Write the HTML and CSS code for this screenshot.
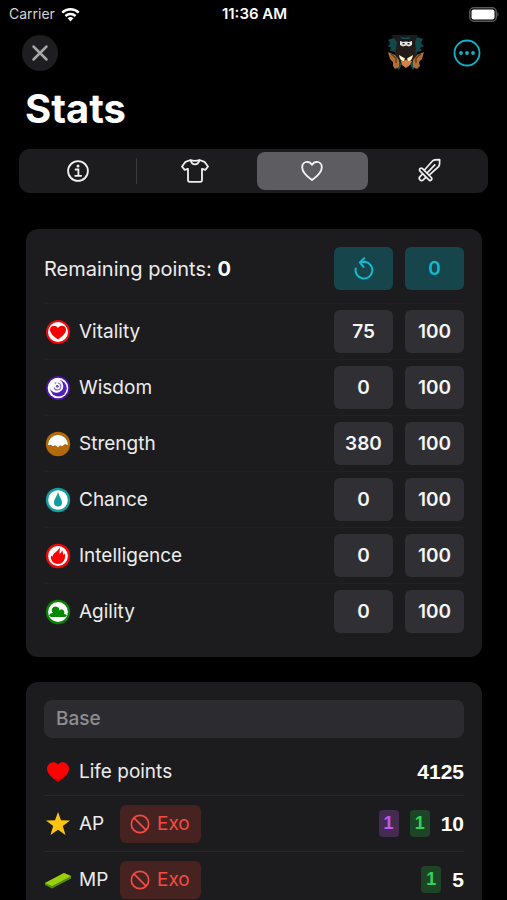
FILE: index.html
```html
<!DOCTYPE html>
<html lang="en">
<head>
<meta charset="utf-8">
<meta name="viewport" content="width=device-width, initial-scale=1">
<title>Stats</title>
<link rel="stylesheet" href="styles.css">
</head>
<body>
<div class="app">
  <div class="status">
    <div class="status-left"><span>Carrier</span>
      <svg class="wifi" viewBox="0 0 20 16" width="19" height="15" fill="none" stroke="#fff" stroke-width="2.6"><path d="M1.2 6A12.6 12.6 0 0 1 18.8 6"/><path d="M4.6 9.6A7.8 7.8 0 0 1 15.4 9.6"/><path d="M10 15.4L6.9 12.1a4.4 4.4 0 0 1 6.2 0z" fill="#fff" stroke="none"/></svg>
    </div>
    <div class="status-time">11:36 AM</div>
    <div class="status-right">
      <svg viewBox="0 0 31 15" width="31" height="15"><rect x=".75" y=".75" width="26.5" height="13.5" rx="4" fill="none" stroke="#58585a" stroke-width="1.5"/><rect x="2.5" y="2.5" width="23" height="10" rx="2" fill="#fff"/><path d="M28.5 5q2 2.500 0 5z" fill="#69696b"/></svg>
    </div>
  </div>

  <header class="nav">
    <button class="close" aria-label="Close"><svg viewBox="0 0 36 36" width="36" height="36" stroke="#a5a5aa" stroke-width="2.500" stroke-linecap="round"><path d="M11.500 11.500l13 13M24.500 11.500l-13 13"/></svg></button>
    <div class="nav-actions">
      <button class="plain" aria-label="Character">
        <svg viewBox="0 0 38 38" width="38" height="38">
          <path d="M6 4L1 6l2 3-2 4 3 0-1 4 5 1 2 8h18l2-8 5-1-2-3 4-2-3-3 2-4-6-2z" fill="#12474c"/>
          <path d="M4 1h27l-3 7 1 8H9l1-8z" fill="#1d1c1c"/>
          <path d="M14 3l4 1 5-1-1 2h-7z" fill="#14545a"/>
          <path d="M9 13q10-5 19 0l1 10-3 6H12l-4-6z" fill="#241c18"/>
          <path d="M10 26l-1 7 3 3 3-6zM28 26l1 6-3 4-3-6z" fill="#125257"/>
          <path d="M1 18l7 3 4 5 0 7-4 2-2-3 0-4-3-3zM37 18l-7 3-4 5 0 7 4 2 3-3-1-4 3-3z" fill="#b07034"/>
          <path d="M4 20l5 4 0 5M34 20l-5 4 0 5" stroke="#5c381c" fill="none" stroke-width="1.300"/>
          <path d="M14 27l5-1 6 1-2 4-4 3-4-3z" fill="#d98243"/>
          <path d="M12 21l6 3.500-1 2.500q-4 .5-5-6zM26 21l-6 3.500 1 2.500q4 .5 5-6z" fill="#fff7cf"/>
          <path d="M13 7l3 1 3-.5 3 .5 3-1 0 4-3 1.500-3-1-3 1-3-1.500z" fill="#e8e6e0"/>
          <path d="M15.500 9.700h2M20.500 9.700h2" stroke="#222" stroke-width="1.500"/>
        </svg>
      </button>
      <button class="plain" aria-label="More"><svg viewBox="0 0 28 28" width="28" height="28"><circle cx="14" cy="14" r="12.500" fill="none" stroke="#13b2c6" stroke-width="1.800"/><g fill="#13b2c6"><circle cx="8" cy="14" r="1.900"/><circle cx="14" cy="14" r="1.900"/><circle cx="20" cy="14" r="1.900"/></g></svg></button>
    </div>
  </header>

  <h1>Stats</h1>

  <nav class="tabs" aria-label="Sections">
    <button class="tab" aria-label="Info"><svg viewBox="0 0 28 28" width="28" height="28" fill="none" stroke="#f0f0f0" stroke-width="1.800"><circle cx="14" cy="14" r="9.900"/><path d="M11.600 12.500h2.800v6M11.200 18.800h6" stroke-linecap="round"/><circle cx="14" cy="9" r="1.500" fill="#f0f0f0" stroke="none"/></svg></button>
    <button class="tab divided" aria-label="Equipment"><svg viewBox="0 0 28 28" width="28" height="28" fill="none" stroke="#f0f0f0" stroke-width="1.800" stroke-linejoin="round"><path d="M9.500 3L4.500 4.800 1 9.500l2.500 3.300 3.500-1V23q0 1.800 1.800 1.800h10.400q1.800 0 1.800-1.800V11.800l3.500 1L27 9.500l-3.500-4.700L18.500 3M9.500 3q1 4.300 4.500 4.300T18.500 3q-4.500 1.700-9 0z"/></svg></button>
    <button class="tab selected" aria-label="Stats"><svg viewBox="0 0 28 28" width="28" height="28" fill="none" stroke="#f5f5f5" stroke-width="1.800" stroke-linejoin="round"><path d="M14 23C8.500 19 4.200 15 4.200 10.400c0-3.200 2.100-5.500 4.900-5.500 2.200 0 3.900 1.100 4.900 3 1-1.900 2.700-3 4.900-3 2.800 0 4.900 2.300 4.900 5.500C23.800 15 19.500 19 14 23z"/></svg></button>
    <button class="tab" aria-label="Weapons"><svg viewBox="1 0 28 28" width="28" height="28" fill="none" stroke="#f0f0f0" stroke-width="1.700" stroke-linejoin="round"><path d="M10 13.500l8.700-9.700 2-.9 5-.2-.2 5-.9 2-9.700 8.700M12.700 16.300l8.600-8.900"/><path d="M6.100 11.700q1.200-1.200 2.400 0l8.800 8.800q1.200 1.200 0 2.400t-2.400 0L6.100 14.100q-1.200-1.200 0-2.400z"/><path d="M8.600 17l-2.600 2.600a2.100 2.100 0 1 0 3.200 3.200l2.800-2.600"/></svg></button>
  </nav>

  <main class="cards">
    <section class="card">
      <div class="summary">
        <p>Remaining points: <strong>0</strong></p>
        <button class="box teal" aria-label="Reset"><svg viewBox="0 0 24 24" width="24" height="24" fill="none" stroke="#13bace" stroke-width="2" stroke-linecap="round" stroke-linejoin="round"><path d="M3.700 11.500a8.400 8.400 0 1 0 9.300-6.700L8.500 5.300M12.200 1.200L7.800 5.400l3.700 4.400"/></svg></button>
        <button class="box teal">0</button>
      </div>
      <div class="row">
        <svg class="icon" viewBox="0 0 26 26"><circle cx="13" cy="13" r="12" fill="#f00808"/><circle cx="13" cy="13" r="10" fill="#fff"/><path d="M13 20.500C7.500 16.500 5 14 5 10.600 5 6.500 10.500 5 13 9c2.500-4 8-2.500 8 1.600 0 3.400-2.500 5.900-8 9.900z" fill="#f50000"/></svg>
        <span class="name">Vitality</span><button class="box">75</button><button class="box">100</button>
      </div>
      <div class="row">
        <svg class="icon" viewBox="0 0 26 26"><circle cx="13" cy="13" r="12" fill="#4c13ad"/><circle cx="13" cy="13" r="10.300" fill="#fff"/><circle cx="13.500" cy="13.300" r="8.300" fill="#5220b8"/><circle cx="11.500" cy="11" r="6.800" fill="#fff"/><path d="M9 12.500a3.500 3.500 0 1 0 4-4.500" fill="none" stroke="#9272d3" stroke-width="1.200"/><circle cx="12.300" cy="11.300" r="1.400" fill="#6b42c4"/><circle cx="10.500" cy="8" r="1" fill="#a78ddc"/></svg>
        <span class="name">Wisdom</span><button class="box">0</button><button class="box">100</button>
      </div>
      <div class="row">
        <svg class="icon" viewBox="0 0 26 26"><circle cx="13" cy="13" r="12.200" fill="#b26b0c"/><path d="M3 14a10 10 0 1 1 20 0l-3-1-3 2.200-2-1-2 2-3-2-2 1-2-1.500z" fill="#fff"/></svg>
        <span class="name">Strength</span><button class="box">380</button><button class="box">100</button>
      </div>
      <div class="row">
        <svg class="icon" viewBox="0 0 26 26"><circle cx="13" cy="13" r="12.200" fill="#159da0"/><circle cx="13" cy="13" r="9.800" fill="#fff"/><path d="M13 4.500c.8 5 4 7.500 4 11a4 4 0 0 1-8 0c0-3.500 3.200-6 4-11z" fill="#119da0"/></svg>
        <span class="name">Chance</span><button class="box">0</button><button class="box">100</button>
      </div>
      <div class="row">
        <svg class="icon" viewBox="0 0 26 26"><circle cx="13" cy="13" r="12.200" fill="#ee0808"/><circle cx="13" cy="13" r="9.900" fill="#fff"/><path d="M14.500 4.500c1 2-.4 4.200 0 6.200 1.500-.7 2.500-2 2.500-3.700 1.200 1.700.8 3.500 1.200 5l1.600-1.500c1.200 6-2 10.500-6.800 10.500-5 0-7.700-3.700-7-8.500l1.600 1.300C8 9.500 13.500 8.500 14.500 4.500z" fill="#f00"/></svg>
        <span class="name">Intelligence</span><button class="box">0</button><button class="box">100</button>
      </div>
      <div class="row">
        <svg class="icon" viewBox="0 0 26 26"><circle cx="13" cy="13" r="12.200" fill="#098109"/><circle cx="13" cy="13" r="9.900" fill="#fff"/><path d="M4 16.500q1-3 4-2.500Q5.800 12 7 9.700q1.500-2.500 4.500-2 3 .8 3 3.800 2.500-2.500 4.500.5.800 1.600 0 3 2.300 0 3 1.700-1 1.400-3 1.400H6z" fill="#078607"/></svg>
        <span class="name">Agility</span><button class="box">0</button><button class="box">100</button>
      </div>
    </section>

    <section class="card">
      <h2 class="group">Base</h2>
      <div class="line first">
        <svg class="icon" viewBox="0 0 26 26"><path d="M13 23C6 18 2 14.500 2 9.500 2 4 9.500 1 13 5.500 16.500 1 24 4 24 9.500 24 14.500 20 18 13 23z" fill="#f80404"/><path d="M4.500 15.500Q8 19.500 13 23q5-3.500 8.500-7.500-4 3.500-8.500 5-5-1.500-8.500-5z" fill="#c90606"/></svg>
        <span class="name">Life points</span><strong class="value">4125</strong>
      </div>
      <div class="line">
        <svg class="icon" viewBox="0 0 26 26"><path d="M13 1l3 8.300 9 .1-7.200 5.500 2.700 9.100-7.500-5.300L5.500 24l2.700-9.100L1 9.400l9-.1z" fill="#ffc410"/></svg>
        <span class="short">AP</span>
        <button class="exo"><svg viewBox="0 0 20 20" width="20" height="20" fill="none" stroke="#f54b43" stroke-width="1.700"><circle cx="10" cy="10" r="8.700"/><path d="M3.900 3.900l12.200 12.200"/></svg>Exo</button>
        <span class="badge purple">1</span><span class="badge green">1</span><strong class="value">10</strong>
      </div>
      <div class="line">
        <svg class="icon" viewBox="0 0 26 26"><path d="M0 16L19 6l7 3v2.500L7 21.500 0 18z" fill="#5a8b08"/><path d="M0 16L19 6l7 3L7 19z" fill="#9bd00d"/></svg>
        <span class="short">MP</span>
        <button class="exo"><svg viewBox="0 0 20 20" width="20" height="20" fill="none" stroke="#f54b43" stroke-width="1.700"><circle cx="10" cy="10" r="8.700"/><path d="M3.900 3.900l12.200 12.200"/></svg>Exo</button>
        <span class="badge green">1</span><strong class="value">5</strong>
      </div>
    </section>
  </main>
</div>
</body>
</html>
```
FILE: styles.css
```css
* { box-sizing: border-box; }
body {
  margin: 0;
  background: #000;
  color: #ececed;
  font: 19px/24px Inter, "Liberation Sans", sans-serif;
}
h1, h2, p { margin: 0; }
button {
  border: 0;
  padding: 0;
  background: none;
  color: inherit;
  font: inherit;
}
svg { display: block; flex: none; }
.app { height: 100vh; overflow: hidden; }

.status {
  display: grid;
  grid-template-columns: 1fr auto 1fr;
  align-items: center;
  height: 28px;
  padding: 0 7px 0 9px;
  font-size: 14px;
}
.status-left { display: flex; align-items: center; gap: 6px; color: #d5d5d5; }
.status-time { color: #fff; font-size: 15px; font-weight: 600; }
.status-right { display: flex; justify-content: flex-end; }

.nav {
  display: flex;
  align-items: center;
  justify-content: space-between;
  height: 50px;
  padding: 0 26px 0 22px;
}
.close { border-radius: 50%; background: #1e1e20; }
.nav-actions { display: flex; align-items: center; gap: 28px; }

h1 {
  padding: 6px 25px 0;
  color: #fff;
  font-size: 40px;
  line-height: 50px;
  font-weight: 700;
}

.tabs {
  display: grid;
  grid-template-columns: repeat(4, 1fr);
  height: 44px;
  margin: 15px 19px 0;
  padding: 3px 0;
  border-radius: 11px;
  background: #1c1c1e;
}
.tab {
  display: flex;
  align-items: center;
  justify-content: center;
  margin: 0 3px;
  border-radius: 8px;
}
.tab.selected { background: #5c5c61; }
.tab.divided { position: relative; }
.tab.divided::before {
  content: "";
  position: absolute;
  top: 6px;
  bottom: 6px;
  left: -3px;
  width: 1px;
  background: #3b3b3e;
}

.cards {
  display: flex;
  flex-direction: column;
  gap: 25px;
  padding: 36px 25px 0 26px;
}
.card { padding: 18px; border-radius: 12px; background: #1c1c1e; }
.summary, .row { display: flex; align-items: center; gap: 12px; }
.summary { padding-bottom: 13px; }
.summary p { flex: 1; font-size: 20px; }
strong { color: #fff; font-weight: 700; }
.row { height: 56px; border-top: 1px solid #212123; }
.icon { width: 26px; height: 26px; margin: 0 -4px 0 1px; }
.name { flex: 1; }
.box {
  display: flex;
  align-items: center;
  justify-content: center;
  width: 59px;
  height: 43px;
  border-radius: 6px;
  background: #303034;
  color: #f5f5f5;
  font-weight: 600;
}
.teal { background: #16464c; color: #13bace; }

.group {
  margin-bottom: 10px;
  padding: 7px 12px;
  border-radius: 8px;
  background: #2c2c30;
  color: #8d8d92;
  font-size: 19px;
  font-weight: 500;
}
.line {
  display: flex;
  align-items: center;
  gap: 11px;
  height: 56px;
  border-top: 1px solid #29292b;
}
.line .icon { margin-right: -3px; }
.line.first { height: 47px; border-top: 0; }
.short { min-width: 30px; }
.exo {
  display: flex;
  align-items: center;
  gap: 7px;
  height: 38px;
  margin-right: auto;
  padding: 0 11px 0 10px;
  border-radius: 6px;
  background: #462321;
  color: #f54b43;
}
.badge {
  padding: 2px 5px;
  border-radius: 4px;
  font: 700 18px/23px "Liberation Sans", sans-serif;
}
.purple { background: #432b51; color: #bd5af0; }
.green { background: #1e4428; color: #32d158; }
.value { font: 700 21px/24px "Liberation Sans", sans-serif; }
```
